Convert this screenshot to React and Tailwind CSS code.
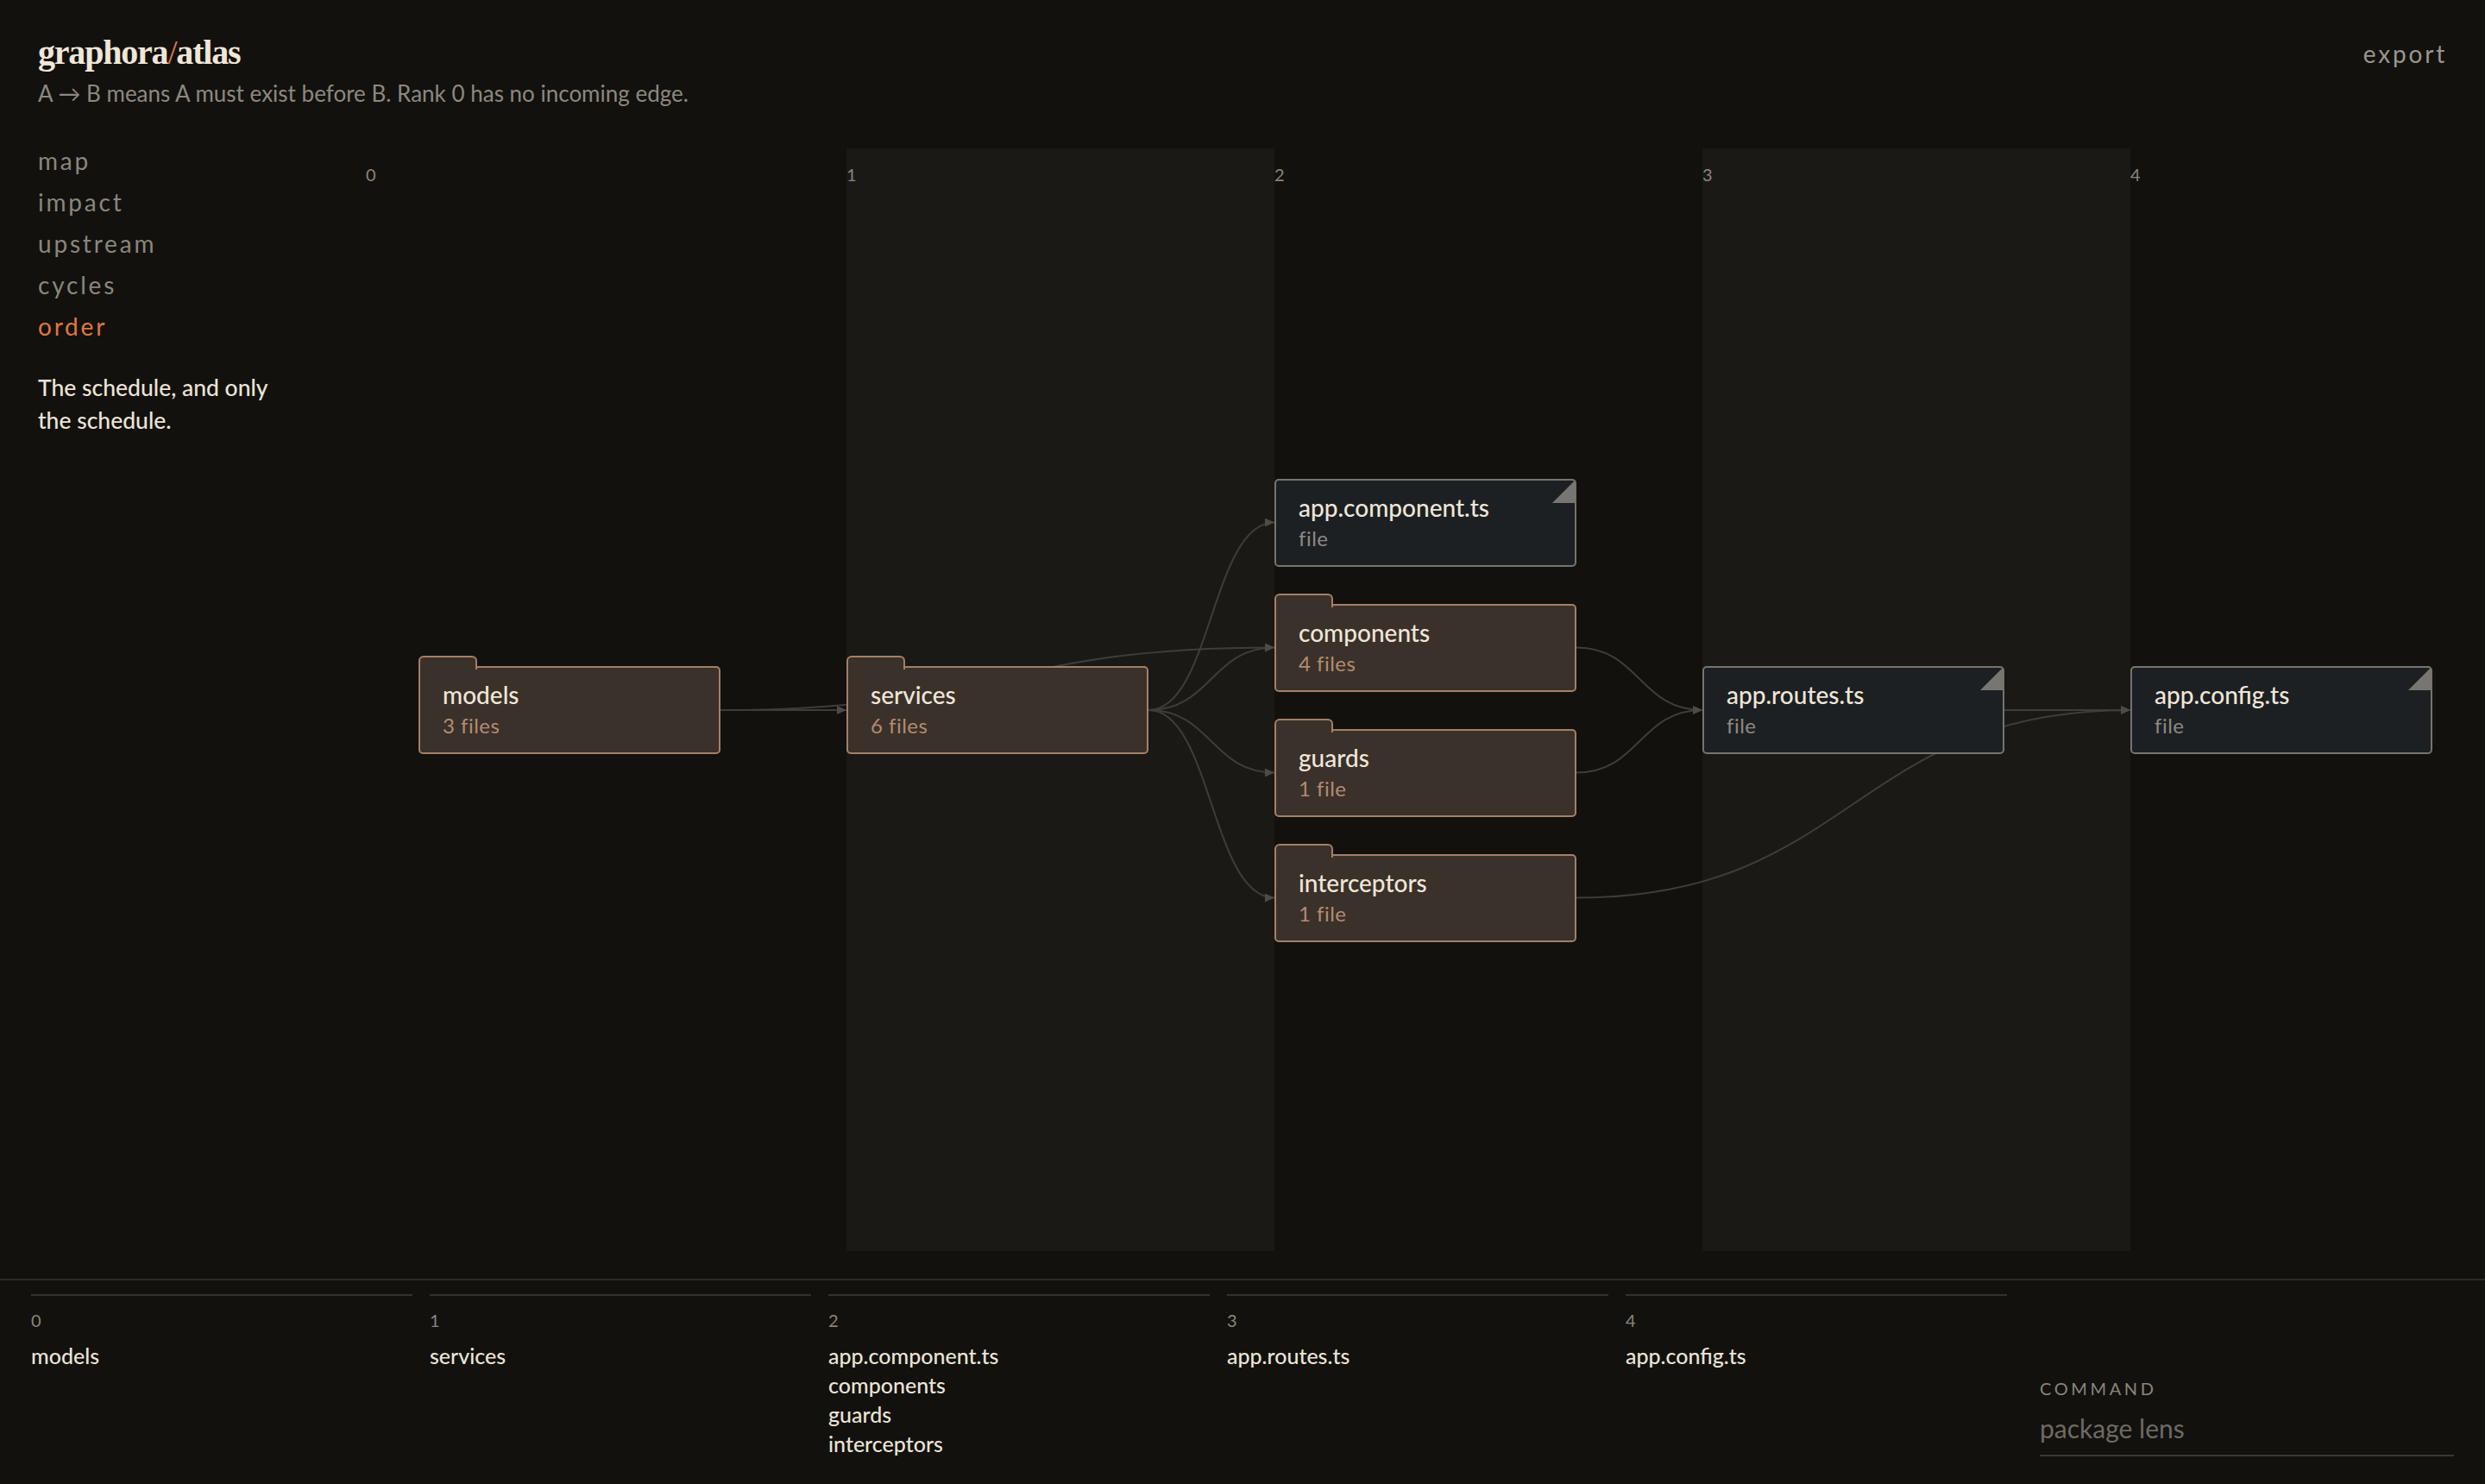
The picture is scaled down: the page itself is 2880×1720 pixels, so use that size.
import React from "react";

const NODE_W = 350;
const NODE_H = 102;
const colX = (r) => 61 + 496 * r;

const nodes = [
  { id: "models", r: 0, top: 600, kind: "folder", sub: "3 files" },
  { id: "services", r: 1, top: 600, kind: "folder", sub: "6 files" },
  { id: "app.component.ts", r: 2, top: 382.5, kind: "file", sub: "file" },
  { id: "components", r: 2, top: 527.5, kind: "folder", sub: "4 files" },
  { id: "guards", r: 2, top: 672.5, kind: "folder", sub: "1 file" },
  { id: "interceptors", r: 2, top: 817.5, kind: "folder", sub: "1 file" },
  { id: "app.routes.ts", r: 3, top: 600, kind: "file", sub: "file" },
  { id: "app.config.ts", r: 4, top: 600, kind: "file", sub: "file" },
];

const byId = Object.fromEntries(nodes.map((n) => [n.id, n]));

const edges = [
  ["models", "services"],
  ["models", "components"],
  ["services", "app.component.ts"],
  ["services", "components"],
  ["services", "guards"],
  ["services", "interceptors"],
  ["components", "app.routes.ts"],
  ["guards", "app.routes.ts"],
  ["app.routes.ts", "app.config.ts"],
  ["interceptors", "app.config.ts"],
];

const ranks = [
  ["models"],
  ["services"],
  ["app.component.ts", "components", "guards", "interceptors"],
  ["app.routes.ts"],
  ["app.config.ts"],
];

const navItems = ["map", "impact", "upstream", "cycles", "order"];

function edgePath(a, b) {
  const s = byId[a];
  const t = byId[b];
  const x1 = colX(s.r) + NODE_W;
  const y1 = s.top + NODE_H / 2;
  const x2 = colX(t.r);
  const y2 = t.top + NODE_H / 2;
  const mx = (x1 + x2) / 2;
  return `M${x1},${y1} C${mx},${y1} ${mx},${y2} ${x2},${y2}`;
}

function Node({ n }) {
  const style = { left: colX(n.r), top: n.top, width: NODE_W, height: NODE_H };
  if (n.kind === "folder") {
    return (
      <div className="absolute" style={style}>
        <div className="absolute left-0 top-[-12px] h-[16px] w-[68px] rounded-t-[6px] border-2 border-b-0 border-[#a47f67] bg-[#3a312a]" />
        <div className="h-full w-full rounded-[5px] rounded-tl-none border-2 border-[#a47f67] bg-[#3a312a] pl-[26px] pt-[13px]">
          <div className="relative text-[28px] leading-[36px] font-medium text-[#efe6d8]">{n.id}</div>
          <div className="mt-[2px] text-[24px] leading-[32px] tracking-[0.02em] text-[#b48b71]">{n.sub}</div>
        </div>
      </div>
    );
  }
  return (
    <div
      className="absolute rounded-[5px] border-2 border-[#77746c] bg-[#1c2023] pl-[26px] pt-[13px]"
      style={style}
    >
      <svg className="absolute right-0 top-0 h-[26px] w-[26px]" viewBox="0 0 26 26">
        <polygon points="26,0 26,26 0,26" fill="#777670" />
      </svg>
      <div className="text-[28px] leading-[36px] font-medium text-[#efe6d8]">{n.id}</div>
      <div className="mt-[2px] text-[24px] leading-[32px] tracking-[0.02em] text-[#8e8a82]">{n.sub}</div>
    </div>
  );
}

const colLabel = "pt-[15px] text-[20px] leading-[30px] text-[#8a857c]";

export default function App() {
  return (
    <div className="flex h-screen w-full flex-col overflow-hidden bg-[#12110e] font-[Lato,'Noto_Sans',sans-serif] text-[#efe6d8]">
      <header className="flex h-[160px] shrink-0 items-start justify-between px-[44px] pt-[37px]">
        <div>
          <h1 className="font-['Liberation_Serif',serif] text-[40px] leading-[48px] font-bold tracking-[-0.03em] text-[#efe6d8]">
            graphora<span className="font-normal text-[#e0773f]">/</span>atlas
          </h1>
          <p className="mt-[5px] text-[26px] leading-[36px] text-[#8d887f]">
            A → B means A must exist before B. Rank 0 has no incoming edge.
          </p>
        </div>
        <button className="mt-[5px] text-[28px] leading-[40px] tracking-[0.1em] text-[#9b968c]">
          export
        </button>
      </header>

      <main className="flex min-h-0 flex-1">
        <aside className="w-[424px] shrink-0 pl-[44px] pt-[2px]">
          <nav className="flex flex-col">
            {navItems.map((item) => (
              <a
                key={item}
                className={
                  item === "order"
                    ? "h-[48px] text-[28px] leading-[48px] tracking-[0.1em] text-[#e0773f]"
                    : "h-[48px] text-[28px] leading-[48px] tracking-[0.1em] text-[#8b867d]"
                }
              >
                {item}
              </a>
            ))}
          </nav>
          <p className="mt-[28px] w-[300px] text-[26.5px] leading-[38px] font-medium text-[#ece4d6]">
            The schedule, and only the schedule.
          </p>
        </aside>

        <section className="min-w-0 flex-1 pb-[32px] pt-[12px]">
          <div className="relative h-full">
            <div className="flex h-full">
              <div className={"w-[557px] shrink-0 " + colLabel}>0</div>
              <div className={"w-[496px] shrink-0 bg-[#1a1915] " + colLabel}>1</div>
              <div className={"w-[496px] shrink-0 " + colLabel}>2</div>
              <div className={"w-[496px] shrink-0 bg-[#1a1915] " + colLabel}>3</div>
              <div className={"flex-1 " + colLabel}>4</div>
            </div>

            <svg className="pointer-events-none absolute inset-0 h-full w-full overflow-visible">
              <defs>
                <marker
                  id="arrow"
                  viewBox="0 0 6 6"
                  refX="6"
                  refY="3"
                  markerWidth="11"
                  markerHeight="10"
                  markerUnits="userSpaceOnUse"
                  orient="auto"
                  preserveAspectRatio="none"
                >
                  <path d="M0,0 L6,3 L0,6 z" fill="#4d4b46" />
                </marker>
              </defs>
              {edges.map(([a, b]) => (
                <path
                  key={a + b}
                  d={edgePath(a, b)}
                  fill="none"
                  stroke="#3f3d39"
                  strokeWidth="2"
                  markerEnd="url(#arrow)"
                />
              ))}
            </svg>

            {nodes.map((n) => (
              <Node key={n.id} n={n} />
            ))}
          </div>
        </section>
      </main>

      <footer className="flex h-[238px] shrink-0 border-t-2 border-[#2c2a26] px-[36px] pt-[16px]">
        <div className="flex gap-[20px]">
          {ranks.map((names, i) => (
            <div key={i} className="w-[442px] border-t-2 border-[#34322e] pt-[13px]">
              <div className="text-[20px] leading-[30px] text-[#8a857c]">{i}</div>
              <ul className="mt-[9px]">
                {names.map((name) => (
                  <li key={name} className="text-[25px] leading-[34px] font-medium text-[#ece4d6]">
                    {name}
                  </li>
                ))}
              </ul>
            </div>
          ))}
        </div>
        <div className="mb-[32px] ml-auto w-[480px] self-end">
          <div className="text-[20px] leading-[32px] tracking-[0.18em] text-[#8a857c]">COMMAND</div>
          <div className="mt-[8px] border-b-2 border-[#3a3834] pb-[9px]">
            <input
              className="block h-[44px] w-full bg-transparent text-[30px] leading-[44px] text-[#ece4d6] outline-none placeholder:text-[#6e6a62]"
              placeholder="package lens"
            />
          </div>
        </div>
      </footer>
    </div>
  );
}
